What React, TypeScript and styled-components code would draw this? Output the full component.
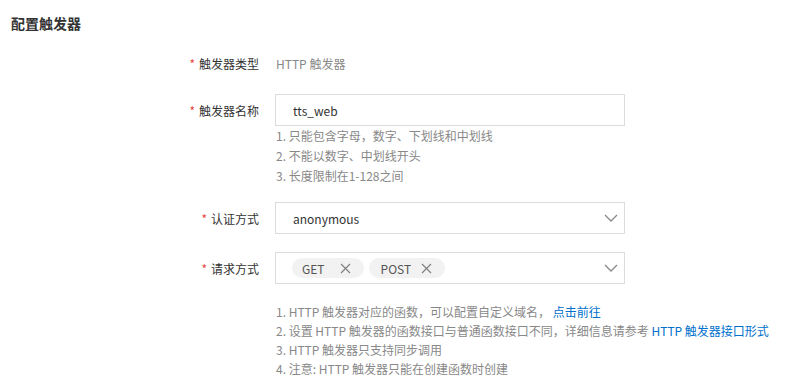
import React from "react";
import styled, { createGlobalStyle } from "styled-components";

const Global = createGlobalStyle`
  html, body { margin: 0; padding: 0; background: #fff; }
  body { font-family: "Noto Sans CJK SC", "Noto Sans", sans-serif; font-size: 12px; color: #333; }
`;

const Page = styled.div`
  width: 792px;
  height: 388px;
  padding: 13px 0 0 11px;
  box-sizing: border-box;
`;

const Title = styled.h2`
  margin: 0;
  font-size: 14px;
  font-weight: 700;
  color: #333;
  line-height: 20px;
`;

const Form = styled.div`
  margin-top: 20px;
  display: flex;
  flex-direction: column;
`;

const Row = styled.div<{ $mt?: number }>`
  display: grid;
  grid-template-columns: 248px 350px;
  column-gap: 16px;
  align-items: start;
  margin-top: ${(p) => p.$mt ?? 0}px;
`;

const Label = styled.div<{ $h: number }>`
  height: ${(p) => p.$h}px;
  display: flex;
  align-items: center;
  justify-content: flex-end;
  padding-top: 1px;
  box-sizing: border-box;
  color: #333;
  font-size: 12px;
`;

const Star = styled.span`
  color: #e54545;
  margin-right: 4px;
`;

const PlainValue = styled.div`
  height: 20px;
  display: flex;
  align-items: center;
  padding-left: 1px;
  color: #888;
`;

const Box = styled.div`
  height: 32px;
  border: 1px solid #dcdcdc;
  box-sizing: border-box;
  display: flex;
  align-items: center;
  padding: 0 6px 0 17px;
  color: #333;
  font-size: 12px;
`;

const BoxText = styled.span`
  flex: 1;
`;

const Tags = styled.div`
  flex: 1;
  display: flex;
  gap: 5px;
  margin-left: -1px;
`;

const Tag = styled.span<{ $pl: number; $gap: number }>`
  height: 20px;
  border-radius: 10px;
  background: #f2f2f2;
  display: inline-flex;
  align-items: center;
  padding: 0 13px 0 ${(p) => p.$pl}px;
  gap: ${(p) => p.$gap}px;
  color: #555;
  font-size: 12px;
`;

const Help = styled.div<{ $lh: number }>`
  display: flex;
  flex-direction: column;
  color: #888;
  font-size: 12px;
  line-height: ${(p) => p.$lh}px;
  padding-left: 1px;
`;

const Notes = styled(Help)`
  margin-top: 18px;
  margin-left: 264px;
`;

const Link = styled.a`
  color: #0070cc;
  text-decoration: none;
  cursor: pointer;
`;

const Chevron = () => (
  <svg width="14" height="8" viewBox="0 0 14 8">
    <path d="M1 1 L7 7 L13 1" fill="none" stroke="#888" strokeWidth="1.3" />
  </svg>
);

const Cross = () => (
  <svg width="11" height="11" viewBox="0 0 11 11">
    <path d="M1 1 L10 10 M10 1 L1 10" fill="none" stroke="#808080" strokeWidth="1.2" />
  </svg>
);

export default function App() {
  return (
    <Page>
      <Global />
      <Title>配置触发器</Title>
      <Form>
        <Row>
          <Label $h={20}>
            <Star>*</Star>触发器类型
          </Label>
          <PlainValue>HTTP 触发器</PlainValue>
        </Row>
        <Row $mt={21}>
          <Label $h={32}>
            <Star>*</Star>触发器名称
          </Label>
          <div>
            <Box>
              <BoxText>tts_web</BoxText>
            </Box>
            <Help $lh={20}>
              <span>1. 只能包含字母，数字、下划线和中划线</span>
              <span>2. 不能以数字、中划线开头</span>
              <span>3. 长度限制在1-128之间</span>
            </Help>
          </div>
        </Row>
        <Row $mt={16}>
          <Label $h={32}>
            <Star>*</Star>认证方式
          </Label>
          <Box>
            <BoxText>anonymous</BoxText>
            <Chevron />
          </Box>
        </Row>
        <Row $mt={18}>
          <Label $h={32}>
            <Star>*</Star>请求方式
          </Label>
          <Box>
            <Tags>
              <Tag $pl={10} $gap={15}>
                GET <Cross />
              </Tag>
              <Tag $pl={12} $gap={10}>
                POST <Cross />
              </Tag>
            </Tags>
            <Chevron />
          </Box>
        </Row>
      </Form>
      <Notes $lh={19}>
        <span>
          1. HTTP 触发器对应的函数，可以配置自定义域名， <Link>点击前往</Link>
        </span>
        <span>
          2. 设置 HTTP 触发器的函数接口与普通函数接口不同，详细信息请参考 <Link>HTTP 触发器接口形式</Link>
        </span>
        <span>3. HTTP 触发器只支持同步调用</span>
        <span>4. 注意: HTTP 触发器只能在创建函数时创建</span>
      </Notes>
    </Page>
  );
}
